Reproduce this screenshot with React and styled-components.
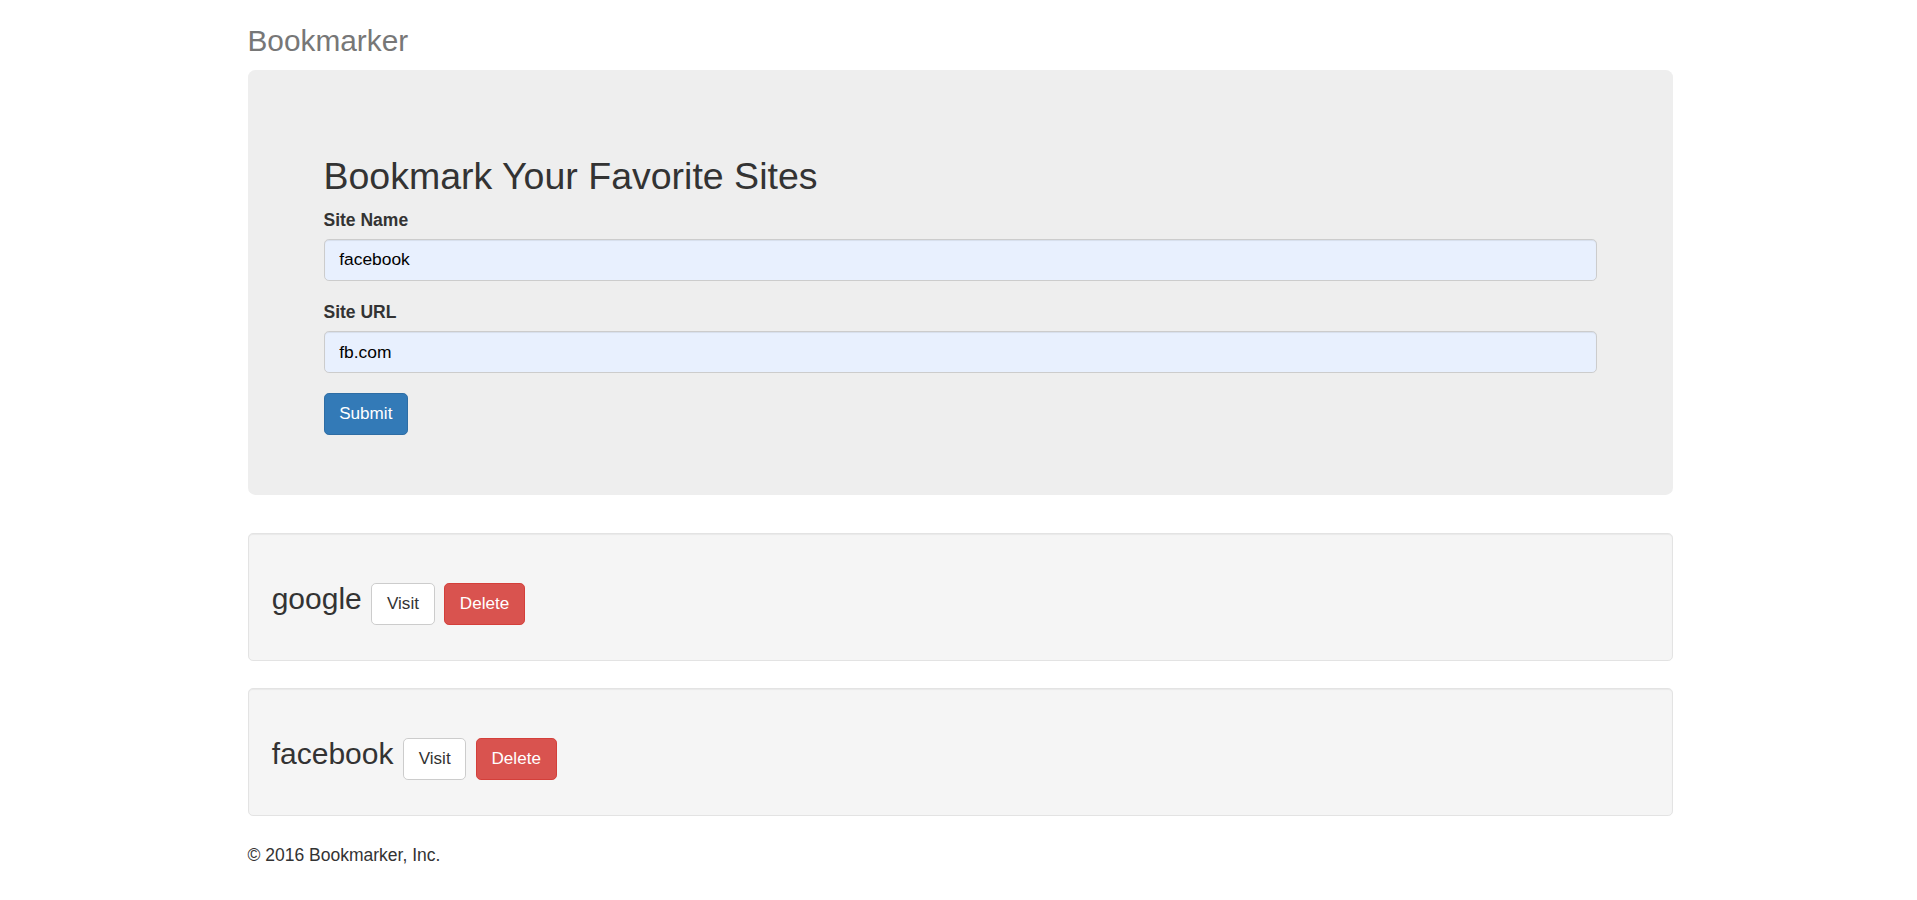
import React from "react";
import styled, { createGlobalStyle, css } from "styled-components";

const GlobalStyle = createGlobalStyle`
  * {
    box-sizing: border-box;
  }
  body {
    margin: 0;
    background: #fff;
    color: #333;
    font-family: "Liberation Sans", Arial, Helvetica, sans-serif;
    font-size: 17.1px;
    line-height: 24.45px;
  }
`;

const StyledContainer = styled.div`
  width: 1425px;
  margin-left: calc(50% - 711px);
`;

const StyledBrand = styled.h3`
  margin: 25px 0 12.4px;
  font-size: 29.8px;
  line-height: 32.2px;
  font-weight: 500;
  color: #777;
`;

const StyledJumbotron = styled.section`
  background: #eee;
  border-radius: 7.3px;
  padding: 59px 76px 59.3px;
  margin-bottom: 38.3px;
`;

const StyledTitle = styled.h2`
  margin: 27px 0 11.7px;
  font-size: 37.5px;
  line-height: 40.7px;
  font-weight: 500;
`;

const StyledFormGroup = styled.div`
  margin-bottom: 19.5px;
`;

const StyledLabel = styled.label`
  display: block;
  margin-bottom: 6.5px;
  font-size: 17.5px;
  font-weight: 700;
`;

const StyledInput = styled.input`
  display: block;
  width: 100%;
  height: 42px;
  padding: 7.3px 14.7px;
  font-family: inherit;
  font-size: 17.4px;
  line-height: 24.45px;
  color: #000;
  background: #e8f0fe;
  border: 1px solid #ccc;
  border-radius: 4.9px;
  box-shadow: inset 0 1px 1px rgba(0, 0, 0, 0.075);
  outline: none;
`;

const variants = {
  primary: css`
    color: #fff;
    background: #337ab7;
    border-color: #2e6da4;
  `,
  default: css`
    color: #333;
    background: #fff;
    border-color: #ccc;
  `,
  danger: css`
    color: #fff;
    background: #d9534f;
    border-color: #d43f3a;
  `,
};

const StyledButton = styled.a`
  display: inline-block;
  padding: 7.95px 14.7px;
  font-family: inherit;
  font-size: 17.1px;
  line-height: 24.45px;
  font-weight: 400;
  text-align: center;
  text-decoration: none;
  white-space: nowrap;
  border: 1px solid transparent;
  border-radius: 4.9px;
  cursor: pointer;
  ${props => variants[props.$variant]}
`;

const StyledWell = styled.div`
  background: #f5f5f5;
  border: 1px solid #e3e3e3;
  border-radius: 4.9px;
  box-shadow: inset 0 1px 1px rgba(0, 0, 0, 0.05);
  padding: 49px 23.2px 35px;
  margin-bottom: 26.6px;
`;

const StyledBookmarkRow = styled.div`
  display: flex;
  align-items: baseline;
  gap: 9.5px;
`;

const StyledSiteName = styled.h3`
  margin: 0;
  font-size: 30px;
  line-height: 32.2px;
  font-weight: 500;
`;

const StyledFooter = styled.footer`
  p {
    margin: 0 0 12px;
    font-size: 17.5px;
  }
`;

const bookmarks = [
  { name: "google", url: "http://google.com" },
  { name: "facebook", url: "http://fb.com" },
];

const App = () => {
  return (
    <StyledContainer>
      <GlobalStyle />
      <StyledBrand>Bookmarker</StyledBrand>
      <StyledJumbotron>
        <StyledTitle>Bookmark Your Favorite Sites</StyledTitle>
        <form onSubmit={e => e.preventDefault()}>
          <StyledFormGroup>
            <StyledLabel>Site Name</StyledLabel>
            <StyledInput type="text" defaultValue="facebook" />
          </StyledFormGroup>
          <StyledFormGroup>
            <StyledLabel>Site URL</StyledLabel>
            <StyledInput type="text" defaultValue="fb.com" />
          </StyledFormGroup>
          <StyledButton as="button" type="submit" $variant="primary">
            Submit
          </StyledButton>
        </form>
      </StyledJumbotron>
      {bookmarks.map(b => (
        <StyledWell key={b.name}>
          <StyledBookmarkRow>
            <StyledSiteName>{b.name}</StyledSiteName>
            <StyledButton $variant="default" href={b.url}>
              Visit
            </StyledButton>
            <StyledButton $variant="danger" href="#">
              Delete
            </StyledButton>
          </StyledBookmarkRow>
        </StyledWell>
      ))}
      <StyledFooter>
        <p>&copy; 2016 Bookmarker, Inc.</p>
      </StyledFooter>
    </StyledContainer>
  );
};

export default App;
